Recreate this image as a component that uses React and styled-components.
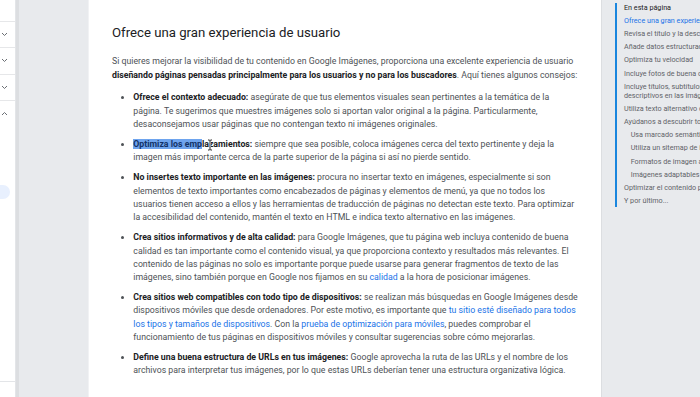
import React from "react";
import styled, { createGlobalStyle } from "styled-components";

const Global = createGlobalStyle`
  html, body { margin: 0; padding: 0; overflow: hidden; background: #e8eaed; }
  body { font-family: Roboto, "Liberation Sans", Arial, sans-serif; }
  * { box-sizing: border-box; }
`;

const Page = styled.div`
  display: flex;
  width: 700px;
  height: 397px;
  overflow: hidden;
  background: #e8eaed;
`;

/* ---------- left navigation (scrolled, only edge visible) ---------- */
const LeftNav = styled.nav`
  flex: 0 0 16px;
  display: flex;
  flex-direction: column;
  background: #fff;
  border-right: 1px solid #e3e5e8;
`;

const NavTop = styled.div`
  height: 21px;
`;

const NavRow = styled.div`
  height: 26.3px;
  display: flex;
  align-items: center;
  padding-left: 1px;
  border-top: 1px solid #e6e7e9;
`;

const NavExpanded = styled.div`
  flex: 1;
  display: flex;
  flex-direction: column;
  padding-top: 59px;
`;

const ActivePill = styled.div`
  width: 10px;
  height: 14px;
  background: #e8f0fe;
  border-radius: 0 7px 7px 0;
`;

const NavBottomLine = styled.div`
  margin-top: auto;
  margin-bottom: 15px;
  border-top: 1px solid #e3e5e8;
`;

const Chevron = ({ up }) => (
  <svg width="7" height="5" viewBox="0 0 7 5">
    <polyline
      points={up ? "1,4 3.5,1.5 6,4" : "1,1 3.5,3.5 6,1"}
      fill="none"
      stroke="#6b6f74"
      strokeWidth="1"
    />
  </svg>
);

/* ---------- grey gutter ---------- */
const Gutter = styled.div`
  flex: 0 0 73px;
  background: #e8eaed;
  border-left: 3px solid #dcdee1;
  border-right: 1.5px solid #f1f2f4;
`;

/* ---------- article ---------- */
const Article = styled.main`
  flex: 0 0 512px;
  background: #fff;
  padding: 25px 21px 0 23px;
  color: #4e5256;
  font-size: 8.75px;
  line-height: 13.33px;
`;

const Heading = styled.h2`
  margin: 0 0 14.3px;
  font-family: Roboto, "Liberation Sans", Arial, sans-serif;
  font-weight: 400;
  font-size: 13.2px;
  line-height: 16px;
  color: #202124;
`;

const Intro = styled.p`
  margin: 0 0 9.3px;
`;

const Strong = styled.strong`
  font-weight: 700;
  color: #202124;
`;

const Link = styled.a`
  color: #1a73e8;
  text-decoration: none;
`;

const Tips = styled.ul`
  margin: 0;
  padding-left: 21.3px;
  list-style: disc;
`;

const Tip = styled.li`
  position: relative;
  margin-bottom: 6.67px;
  &::marker { color: #4e5256; }
`;

const Selected = styled.span`
  background: #6ea4ee;
  color: #123266;
`;

const IBeam = styled.svg`
  position: absolute;
  left: 74px;
  top: 1px;
  pointer-events: none;
`;

/* ---------- right table of contents ---------- */
const TocArea = styled.aside`
  flex: 1;
  min-width: 0;
  overflow: hidden;
  background: #e8eaed;
  border-left: 1px solid #dcdee1;
  padding: 3px 0 0 13px;
`;

const Toc = styled.ul`
  margin: 0;
  padding: 0 0 0 7px;
  list-style: none;
  width: 140px;
  border-left: 2px solid #1a86de;
  font-size: 7.2px;
  line-height: 9px;
  color: #5f6368;
  white-space: nowrap;
`;

const TocTitle = styled.li`
  color: #202124;
  margin-bottom: 1.7px;
`;

const TocItem = styled.li`
  padding: 2.1px 0 2.1px ${(p) => (p.$sub ? "6.7px" : "0")};
  color: ${(p) => (p.$active ? "#1a73e8" : "#5f6368")};
`;

export default function App() {
  return (
    <>
      <Global />
      <Page>
        <LeftNav>
          <NavTop />
          <NavRow><Chevron /></NavRow>
          <NavRow><Chevron /></NavRow>
          <NavRow><Chevron /></NavRow>
          <NavRow><Chevron up /></NavRow>
          <NavExpanded>
            <ActivePill />
            <NavBottomLine />
          </NavExpanded>
        </LeftNav>

        <Gutter />

        <Article>
          <Heading>Ofrece una gran experiencia de usuario</Heading>
          <Intro>
            Si quieres mejorar la visibilidad de tu contenido en Google Imágenes, proporciona una excelente
            experiencia de usuario{" "}
            <Strong>diseñando páginas pensadas principalmente para los usuarios y no para los buscadores</Strong>.
            Aquí tienes algunos consejos:
          </Intro>
          <Tips>
            <Tip>
              <Strong>Ofrece el contexto adecuado:</Strong> asegúrate de que tus elementos visuales sean
              pertinentes a la temática de la
              <br />
              página. Te sugerimos que muestres imágenes solo si aportan valor original a la página.
              Particularmente, desaconsejamos usar páginas que no contengan texto ni imágenes originales.
            </Tip>
            <Tip>
              <Strong><Selected>Optimiza los emp</Selected>lazamientos:</Strong> siempre que sea posible, coloca
              imágenes cerca del texto pertinente y deja la imagen más importante cerca de la parte superior de
              la página si así no pierde sentido.
              <IBeam width="6" height="12" viewBox="0 0 6 12">
                <path d="M1 1h1.5l.5.5.5-.5H5M3 1.5v9M1 11h1.5l.5-.5.5.5H5" fill="none" stroke="#fff" strokeWidth="2" />
                <path d="M1 1h1.5l.5.5.5-.5H5M3 1.5v9M1 11h1.5l.5-.5.5.5H5" fill="none" stroke="#111" strokeWidth="0.9" />
              </IBeam>
            </Tip>
            <Tip>
              <Strong>No insertes texto importante en las imágenes:</Strong> procura no insertar texto en
              imágenes, especialmente si son elementos de texto importantes como encabezados de páginas y
              elementos de menú, ya que no todos los usuarios tienen acceso a ellos y las herramientas de
              traducción de páginas no detectan este texto. Para optimizar la accesibilidad del contenido, mantén
              el texto en HTML e indica texto alternativo en las imágenes.
            </Tip>
            <Tip>
              <Strong>Crea sitios informativos y de alta calidad:</Strong> para Google Imágenes, que tu página
              web incluya contenido de buena calidad es tan importante como el contenido visual, ya que
              proporciona contexto y resultados más relevantes. El contenido de las páginas no solo es importante
              porque puede usarse para generar fragmentos de texto de las imágenes, sino también porque en Google
              nos fijamos en su <Link href="#">calidad</Link> a la hora de posicionar imágenes.
            </Tip>
            <Tip>
              <Strong>Crea sitios web compatibles con todo tipo de dispositivos:</Strong> se realizan más
              búsquedas en Google Imágenes desde dispositivos móviles que desde ordenadores. Por este motivo, es
              importante que{" "}
              <Link href="#">tu sitio esté diseñado para todos los tipos y tamaños de dispositivos</Link>. Con la{" "}
              <Link href="#">prueba de optimización para móviles</Link>, puedes comprobar el funcionamiento de tus
              páginas en dispositivos móviles y consultar sugerencias sobre cómo mejorarlas.
            </Tip>
            <Tip>
              <Strong>Define una buena estructura de URLs en tus imágenes:</Strong> Google aprovecha la ruta de
              las URLs y el nombre de los archivos para interpretar tus imágenes, por lo que estas URLs deberían
              tener una estructura organizativa lógica.
            </Tip>
          </Tips>
        </Article>

        <TocArea>
          <Toc>
            <TocTitle>En esta página</TocTitle>
            <TocItem $active>Ofrece una gran experiencia de usuario</TocItem>
            <TocItem>Revisa el título y la descripción de la página</TocItem>
            <TocItem>Añade datos estructurados</TocItem>
            <TocItem>Optimiza tu velocidad</TocItem>
            <TocItem>Incluye fotos de buena calidad</TocItem>
            <TocItem>
              Incluye títulos, subtítulos y textos
              <br />
              descriptivos en las imágenes
            </TocItem>
            <TocItem>Utiliza texto alternativo descriptivo</TocItem>
            <TocItem>Ayúdanos a descubrir todas tus imágenes</TocItem>
            <TocItem $sub>Usa marcado semántico para las imágenes</TocItem>
            <TocItem $sub>Utiliza un sitemap de imágenes</TocItem>
            <TocItem $sub>Formatos de imagen admitidos</TocItem>
            <TocItem $sub>Imágenes adaptables</TocItem>
            <TocItem>Optimizar el contenido para SafeSearch</TocItem>
            <TocItem>Y por último...</TocItem>
          </Toc>
        </TocArea>
      </Page>
    </>
  );
}
